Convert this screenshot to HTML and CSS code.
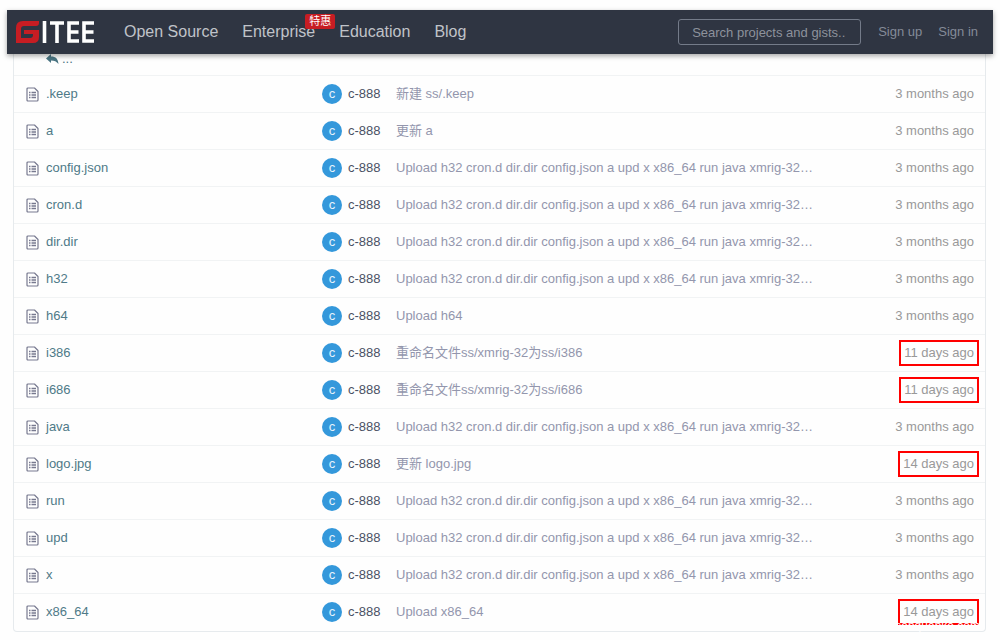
FILE: index.html
```html
<!DOCTYPE html>
<html lang="en">
<head>
<meta charset="utf-8">
<title>Gitee</title>
<link rel="stylesheet" href="styles.css">
</head>
<body>
<svg class="sprite" aria-hidden="true">
  <symbol id="file" viewBox="0 0 13 15">
    <path d="M2 1h6.500L12 4.500V13q0 1-1 1H2q-1 0-1-1V2q0-1 1-1z" fill="none" stroke="#77798f" stroke-width="1.200" stroke-linejoin="round"/>
    <path d="M3 5.500h1.500M5.500 5.500H10M3 8h1.500M5.500 8H10M3 10.500h1.500M5.500 10.500H10" fill="none" stroke="#77798f" stroke-width="1.300"/>
  </symbol>
</svg>
<header class="topbar">
  <a class="logo" href="#" aria-label="Gitee">
    <svg viewBox="0 0 80 24" width="80" height="24">
      <path d="M24 1H8Q1 1 1 8v15h17q6 0 6-6v-7H9v4h9v1q0 3-3 3H6V9q0-3 3-3h12q3 0 3-3z" fill="#c71d23"/>
      <path d="M29.500 1V23M35 3h14M42 3V23M64 3H54V21h10M54 12h9.500M79 3H69V21h10M69 12h9.500" fill="none" stroke="#fff" stroke-width="3.600"/>
    </svg>
  </a>
  <nav class="nav">
    <a href="#">Open Source</a>
    <a class="enterprise" href="#">Enterprise<span class="promo">特惠</span></a>
    <a href="#">Education</a>
    <a href="#">Blog</a>
  </nav>
  <input class="search" type="text" aria-label="Search" placeholder="Search projects and gists..">
  <div class="account"><a href="#">Sign up</a><a href="#">Sign in</a></div>
</header>
<main class="panel">
  <a class="parent" href="#"><svg viewBox="0 0 13 11" width="13" height="11"><path d="M0 4.500L5 0v2.600c5 0 7 2.500 7.500 7.400C10.500 7.500 8.500 6.500 5 6.500V9z" fill="#4a7583"/></svg>...</a>
  <table class="files"><tbody id="rows"></tbody></table>
  <span class="watermark">sanquanke.com</span>
</main>
<script src="files.js"></script>
</body>
</html>
```
FILE: styles.css
```css
* { box-sizing: border-box; }
body {
  margin: 0;
  padding: 10px 7px 9px;
  background: #fefefe;
  font: 13px/20px "Liberation Sans", Arial, "Noto Sans CJK SC", sans-serif;
}
a { color: inherit; text-decoration: none; }
.sprite { display: none; }
.topbar {
  position: relative;
  z-index: 1;
  display: flex;
  align-items: center;
  height: 44px;
  padding: 0 15px 0 8px;
  background: #2f3542;
  box-shadow: 0 2px 5px rgba(0, 0, 0, .35);
}
.logo { display: flex; }
.nav {
  display: flex;
  flex: 1;
  gap: 24px;
  padding-left: 29px;
  color: #c0c3c9;
  font-size: 16px;
}
.enterprise { position: relative; }
.promo {
  position: absolute;
  left: 63px;
  top: -8px;
  padding: 0 4px;
  border-radius: 2px;
  background: #c71d23;
  color: #fff;
  font-size: 11px;
  line-height: 15px;
  white-space: nowrap;
}
.search {
  width: 183px;
  height: 26px;
  padding: 0 10px 0 13px;
  border: 1px solid #747b89;
  border-radius: 3px;
  background: transparent;
  color: #c6cad0;
  font: inherit;
}
.search::placeholder { color: #8d929c; opacity: 1; }
.account { display: flex; gap: 16px; padding-left: 17px; color: #858b98; }
.panel {
  position: relative;
  margin: 0 7px 0 6px;
  border: 1px solid #e6eaed;
  border-top: 0;
  border-radius: 0 0 4px 4px;
}
.parent {
  display: flex;
  align-items: flex-start;
  gap: 3px;
  height: 21px;
  padding-left: 32px;
  color: #4a7583;
  line-height: 10px;
}
.files { width: 100%; border-collapse: collapse; table-layout: fixed; }
.files td { height: 37px; padding: 0; border-top: 1px solid #f1f3f4; white-space: nowrap; }
.files .name { width: 308px; padding-left: 12px; color: #4f7a88; }
.files .author { width: 74px; color: #4a5164; }
.files .message { color: #9396ad; }
.files .age { width: 120px; padding-right: 6px; text-align: right; color: #999; }
.name a, .author a { display: flex; align-items: center; gap: 7px; }
.author a { gap: 6px; }
.avatar {
  width: 20px;
  height: 20px;
  border-radius: 50%;
  background: #3498db;
  color: #e6f3fb;
  text-align: center;
}
.age span { display: inline-block; padding: 1px 3px; border: 2px solid transparent; }
.age .recent { border-color: #f00; }
.watermark {
  position: absolute;
  right: 5px;
  bottom: -2px;
  color: #fff;
  font-size: 12px;
  line-height: 14px;
}
```
FILE: files.js
```js
const upload = "Upload h32 cron.d dir.dir config.json a upd x x86_64 run java xmrig-32…";
const files = [
  [".keep", "新建 ss/.keep", "3 months ago"],
  ["a", "更新 a", "3 months ago"],
  ["config.json", upload, "3 months ago"],
  ["cron.d", upload, "3 months ago"],
  ["dir.dir", upload, "3 months ago"],
  ["h32", upload, "3 months ago"],
  ["h64", "Upload h64", "3 months ago"],
  ["i386", "重命名文件ss/xmrig-32为ss/i386", "11 days ago"],
  ["i686", "重命名文件ss/xmrig-32为ss/i686", "11 days ago"],
  ["java", upload, "3 months ago"],
  ["logo.jpg", "更新 logo.jpg", "14 days ago"],
  ["run", upload, "3 months ago"],
  ["upd", upload, "3 months ago"],
  ["x", upload, "3 months ago"],
  ["x86_64", "Upload x86_64", "14 days ago"]
];
document.getElementById("rows").innerHTML = files.map(([name, message, age]) => `
  <tr>
    <td class="name"><a href="#"><svg width="13" height="15"><use href="#file"/></svg>${name}</a></td>
    <td class="author"><a href="#"><span class="avatar">c</span>c-888</a></td>
    <td class="message">${message}</td>
    <td class="age"><span class="${age.includes("days") ? "recent" : ""}">${age}</span></td>
  </tr>`).join("");
```
